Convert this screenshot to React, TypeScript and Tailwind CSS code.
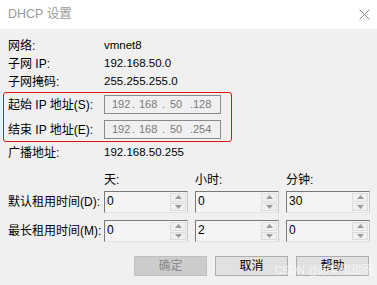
import React from 'react'

const font = { fontFamily: '"Liberation Sans", "Noto Sans CJK SC", sans-serif' }

function InfoRow({ label, value, h }: { label: string; value: string; h: string }) {
    return (
        <div className={`flex items-center ${h}`}>
            <span className="w-[96px] shrink-0">{label}</span>
            <span className="text-[11.5px]">{value}</span>
        </div>
    )
}

function IpField({ parts }: { parts: string[] }) {
    return (
        <div className="flex items-center w-[117px] h-[19px] border border-[#8a8a8a] bg-[#f0f0f0] text-[#7a7a7a] text-[11px] pl-[7px] whitespace-nowrap">
            <span className="w-[20px]">{parts[0]}</span>
            <span className="w-[7px]">.</span>
            <span className="w-[23px]">{parts[1]}</span>
            <span className="w-[8px]">.</span>
            <span className="w-[20px]">{parts[2]}</span>
            <span className="w-[3px]">.</span>
            <span>{parts[3]}</span>
        </div>
    )
}

function SpinBox({ value }: { value: string }) {
    return (
        <div className="flex w-[84px] h-[22px] border border-[#7a7a7a] border-r-[#c8c8c8] border-b-[#e3e3e3] bg-[#f4f4f4]">
            <div className="flex-1 pl-[2px] text-[12px] leading-[18px] text-[#000]">{value}</div>
            <div className="flex flex-col w-[16px] my-[1px] mr-[1px] gap-[1px]">
                <div className="flex-1 flex items-center justify-center border border-[#dcdcdc] bg-[#f0f0f0]">
                    <svg width="7" height="4" viewBox="0 0 7 4"><path d="M3.5 0 L7 4 L0 4 Z" fill="#9a9a9a" /></svg>
                </div>
                <div className="flex-1 flex items-center justify-center border border-[#dcdcdc] bg-[#f0f0f0]">
                    <svg width="7" height="4" viewBox="0 0 7 4"><path d="M0 0 L7 0 L3.5 4 Z" fill="#9a9a9a" /></svg>
                </div>
            </div>
        </div>
    )
}

function Btn({ label, disabled }: { label: string; disabled?: boolean }) {
    return (
        <div
            className={
                disabled
                    ? 'w-[73px] h-[20px] flex items-center justify-center border border-[#bfbfbf] bg-[#cccccc] text-[#8a8a8a]'
                    : 'w-[73px] h-[20px] flex items-center justify-center border border-[#adadad] bg-[#e1e1e1] text-black'
            }
        >
            {label}
        </div>
    )
}

export default function App() {
    return (
        <div className="relative w-[377px] h-[285px] overflow-hidden text-[12px] text-black" style={font}>
            {/* 标题栏 */}
            <div className="flex items-center justify-between h-[29px] bg-white pl-[8px] pr-[7px]">
                <span className="text-[#9a9a9a] text-[12.5px]">DHCP 设置</span>
                <svg width="11" height="11" viewBox="0 0 11 11">
                    <path d="M0.5 0.5 L10.5 10.5 M10.5 0.5 L0.5 10.5" stroke="#8a8a8a" strokeWidth="1" />
                </svg>
            </div>

            <div className="flex flex-col h-[256px] bg-[#f0f0f0] pl-[8px]">
                <div className="mt-[7px]">
                    <InfoRow label="网络:" value="vmnet8" h="h-[19px]" />
                    <InfoRow label="子网 IP:" value="192.168.50.0" h="h-[18px]" />
                    <InfoRow label="子网掩码:" value="255.255.255.0" h="h-[18px]" />
                </div>

                {/* 地址范围 */}
                <div className="mt-[1px] ml-[-5px] w-[229px] h-[50px] border border-[#e81010] rounded-[3px] pl-[4px] pt-[2px] flex flex-col gap-[6px]">
                    <div className="flex items-center">
                        <span className="w-[96px] shrink-0">起始 IP 地址(S):</span>
                        <IpField parts={['192', '168', '50', '128']} />
                    </div>
                    <div className="flex items-center">
                        <span className="w-[96px] shrink-0">结束 IP 地址(E):</span>
                        <IpField parts={['192', '168', '50', '254']} />
                    </div>
                </div>

                <div className="mt-[1px]">
                    <InfoRow label="广播地址:" value="192.168.50.255" h="h-[20px]" />
                </div>

                {/* 租用时间 */}
                <div className="mt-[7px] flex items-center h-[20px] pl-[96px] gap-[7px]">
                    <span className="w-[84px]">天:</span>
                    <span className="w-[84px]">小时:</span>
                    <span className="w-[84px]">分钟:</span>
                </div>
                <div className="mt-[1px] flex items-center h-[22px]">
                    <span className="w-[96px] shrink-0">默认租用时间(D):</span>
                    <div className="flex gap-[7px]">
                        <SpinBox value="0" />
                        <SpinBox value="0" />
                        <SpinBox value="30" />
                    </div>
                </div>
                <div className="mt-[7px] flex items-center h-[22px]">
                    <span className="w-[96px] shrink-0">最长租用时间(M):</span>
                    <div className="flex gap-[7px]">
                        <SpinBox value="0" />
                        <SpinBox value="2" />
                        <SpinBox value="0" />
                    </div>
                </div>

                <div className="mt-[14px] flex justify-end gap-[8px] pr-[8px]">
                    <Btn label="确定" disabled />
                    <Btn label="取消" />
                    <Btn label="帮助" />
                </div>
            </div>

            {/* 水印 */}
            <div className="absolute right-[5px] bottom-[9px] text-[11px] leading-[12px] text-white/70 tracking-tight">
                CSDN @超爱甜甜圈
            </div>
        </div>
    )
}
